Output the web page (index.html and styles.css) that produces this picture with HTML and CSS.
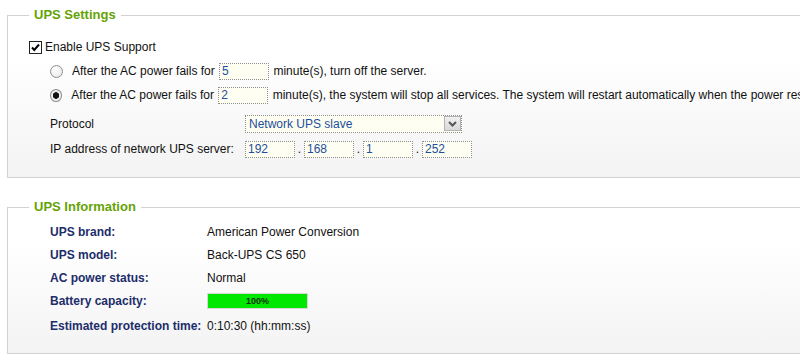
FILE: index.html
```html
<!DOCTYPE html>
<html lang="en">
<head>
  <meta charset="UTF-8" />
  <title>UPS</title>
  <link rel="stylesheet" href="styles.css">
</head>
<body>
  <fieldset class="panel">
    <legend>UPS Settings</legend>

    <div class="row">
      <span class="check"><svg width="11" height="11" viewBox="0 0 11 11"><path d="M2 5.5 L4.3 8 L9 2.5" fill="none" stroke="#000" stroke-width="2"/></svg></span>
      <span>Enable UPS Support</span>
    </div>

    <div class="row indent">
      <span class="radio"></span>
      <span>After the AC power fails for <input class="field" type="text" value="5"> minute(s), turn off the server.</span>
    </div>
    <div class="row indent">
      <span class="radio checked"></span>
      <span>After the AC power fails for <input class="field" type="text" value="2"> minute(s), the system will stop all services. The system will restart automatically when the power resumes.</span>
    </div>

    <div class="row indent form-row protocol">
      <span class="form-label">Protocol</span>
      <div class="select">
        <span class="select-text">Network UPS slave</span>
        <span class="select-btn"><svg width="9" height="6" viewBox="0 0 9 6"><path d="M1 1 L4.5 4.5 L8 1" fill="none" stroke="#555" stroke-width="2"/></svg></span>
      </div>
    </div>

    <div class="row indent form-row ip">
      <span class="form-label">IP address of network UPS server:</span>
      <input class="field" type="text" value="192"><span class="dot">.</span><input class="field" type="text" value="168"><span class="dot">.</span><input class="field" type="text" value="1"><span class="dot">.</span><input class="field" type="text" value="252">
    </div>
  </fieldset>

  <fieldset class="panel info">
    <legend>UPS Information</legend>
    <div class="info-row"><span class="info-label">UPS brand:</span><span>American Power Conversion</span></div>
    <div class="info-row"><span class="info-label">UPS model:</span><span>Back-UPS CS 650</span></div>
    <div class="info-row"><span class="info-label">AC power status:</span><span>Normal</span></div>
    <div class="info-row"><span class="info-label">Battery capacity:</span><div class="bar"><div class="bar-fill" style="width: 100%">100%</div></div></div>
    <div class="info-row last"><span class="info-label">Estimated protection time:</span><span>0:10:30 (hh:mm:ss)</span></div>
  </fieldset>
</body>
</html>
```

FILE: styles.css
```css
html, body {
  overflow: hidden;
}

body {
  font-family: 'Liberation Sans', Arial, sans-serif;
  font-size: 12px;
  color: #111;
  background-color: #ffffff;
  margin: 0;
  padding: 7px 0 0 7px;
  width: 830px;
}

.panel {
  margin: 0;
  padding: 12px 0 16px 21px;
  border: 1px solid #d2d2d2;
  background: linear-gradient(to bottom, #ffffff 25%, #f3f3f3 100%);
  min-width: 0;
}

.panel legend {
  font-size: 13px;
  font-weight: bold;
  line-height: 16px;
  color: #64a306;
  margin-left: 0;
  padding: 0 5px;
}

.row {
  display: flex;
  align-items: center;
  height: 24px;
  white-space: nowrap;
}

.indent {
  padding-left: 21px;
}

.check {
  width: 11px;
  height: 11px;
  border: 1px solid #222;
  background: #fff;
  margin-right: 3px;
  display: flex;
}

.radio {
  width: 11px;
  height: 11px;
  border: 1px solid #8e8e8e;
  border-radius: 50%;
  background: radial-gradient(circle at 40% 35%, #ffffff, #e4e4e4);
  margin-right: 9px;
}

.radio.checked {
  background: radial-gradient(circle, #111 0, #111 3px, #f0f0f0 3.5px, #e4e4e4 100%);
}

.field {
  font-family: 'Liberation Sans', Arial, sans-serif;
  font-size: 12px;
  color: #1d4f9c;
  background-color: #fefef2;
  border: 1px dotted #8f8f8f;
  width: 50px;
  height: 17px;
  padding: 0 2px;
  margin: 0 1px;
  box-sizing: border-box;
  vertical-align: middle;
}

.protocol {
  margin-top: 5px;
}

.ip {
  margin-top: 1px;
}

.form-label {
  width: 195px;
}

.select {
  position: relative;
  width: 217px;
  height: 18px;
  box-sizing: border-box;
  border: 1px dotted #8f8f8f;
  background-color: #fefef2;
  color: #1d4f9c;
  display: flex;
  align-items: center;
  padding-left: 3px;
}

.select-btn {
  position: absolute;
  right: 0;
  top: 0;
  width: 17px;
  height: 15px;
  box-sizing: border-box;
  border: 1px solid #b3b3b3;
  background: linear-gradient(to bottom, #f0f0f0, #d9d9d9);
  display: flex;
  align-items: center;
  justify-content: center;
}

.form-row .field {
  margin: 0;
}

.dot {
  width: 9px;
  text-align: center;
}

.info {
  margin-top: 21px;
  padding: 5px 0 16px 21px;
}

.info-row {
  display: flex;
  align-items: center;
  height: 23px;
  padding-left: 21px;
  white-space: nowrap;
}

.info-row.last {
  margin-top: 2px;
}

.info-label {
  width: 157px;
  font-weight: bold;
  color: #1c2d6b;
}

.bar {
  width: 101px;
  height: 16px;
  box-sizing: border-box;
  border: 1px solid #d8d8d8;
  background: #fff;
}

.bar-fill {
  height: 100%;
  background-color: #00e800;
  font-size: 9px;
  font-weight: bold;
  color: #143014;
  text-align: center;
  line-height: 14px;
}
```
